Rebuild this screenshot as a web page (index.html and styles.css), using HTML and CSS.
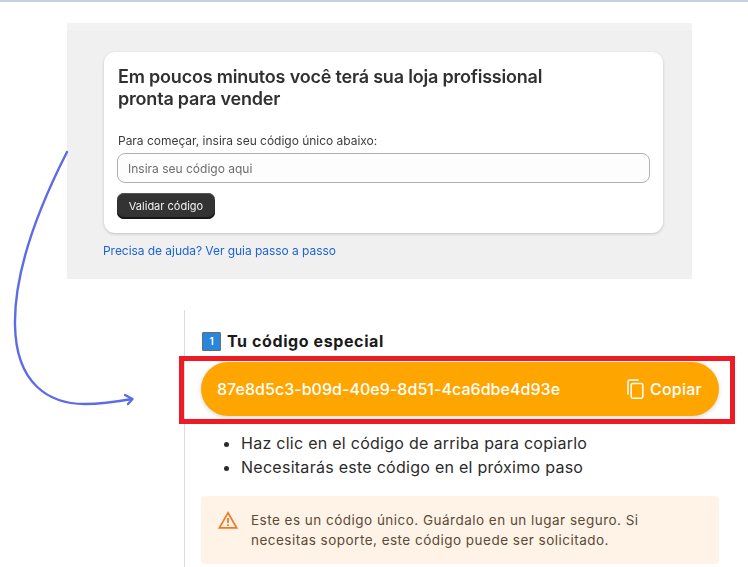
FILE: index.html
```html
<!DOCTYPE html>
<html lang="es">
<head>
<meta charset="utf-8">
<title>Tu código especial</title>
<link rel="stylesheet" href="styles.css">
</head>
<body>
<div class="topbar"></div>
<section class="shot">
  <div class="shot-strip"></div>
  <div class="card">
    <h1 class="card-title">Em poucos minutos você terá sua loja profissional<br>pronta para vender</h1>
    <label class="card-label">Para começar, insira seu código único abaixo:</label>
    <div class="fake-input">Insira seu código aqui</div>
    <div class="fake-button">Validar código</div>
  </div>
  <a class="help-link">Precisa de ajuda? Ver guia passo a passo</a>
</section>
<main class="step">
  <h2 class="step-title"><span class="keycap">1</span>Tu código especial</h2>
  <div class="code-wrap">
    <div class="code-pill">
      <span class="code-value">87e8d5c3-b09d-40e9-8d51-4ca6dbe4d93e</span>
      <span class="copy">
        <svg class="copy-icon" viewBox="0 0 18 20" fill="none" stroke="#fff" stroke-width="1.5" stroke-linejoin="round" stroke-linecap="round">
          <path d="M2 15V3a2 2 0 0 1 2-2h8"/>
          <rect x="5.2" y="4.4" width="11.6" height="14.8" rx="1.6"/>
        </svg>
        Copiar
      </span>
    </div>
    <div class="highlight"></div>
  </div>
  <ul class="tips">
    <li>Haz clic en el código de arriba para copiarlo</li>
    <li>Necesitarás este código en el próximo paso</li>
  </ul>
  <div class="notice">
    <svg class="notice-icon" viewBox="0 0 20 18" fill="none" stroke="#f07a21" stroke-width="1.7" stroke-linejoin="miter">
      <path d="M10 1.8 1.4 16.8h17.2z"/>
      <path d="M10 7v5M10 13.2v1.8" stroke-width="1.8"/>
    </svg>
    <p class="notice-text">Este es un código único. Guárdalo en un lugar seguro. Si necesitas soporte, este código puede ser solicitado.</p>
  </div>
</main>
<svg class="arrow" width="748" height="567" viewBox="0 0 748 567" fill="none" stroke="#5d6be6" stroke-width="2.4" stroke-linecap="round" stroke-linejoin="round">
  <path d="M67 152C40 205 14 270 15 325C16 385 50 404 85 404C100 404 115 402 132 399"/>
  <path d="M125 395 132.500 399 128 404"/>
</svg>
</body>
</html>
```
FILE: styles.css
```css
* { box-sizing: border-box; }
html, body { margin: 0; padding: 0; }
body {
  position: relative;
  width: 748px;
  height: 567px;
  overflow: hidden;
  background: #fff;
  font-family: Inter, "Liberation Sans", sans-serif;
}
.topbar { height: 2px; background: #c6d1e2; }

.shot {
  margin: 21px 56px 0 67px;
  height: 256px;
  background: #f0f0f0;
  display: flex;
  flex-direction: column;
  align-items: flex-start;
  filter: blur(.3px);
}
.shot-strip { height: 9px; width: 100%; background: #f2f2f2; border-bottom: 1px solid #eeeeee; flex: none; }
.card {
  margin: 20px 0 0 37px;
  width: 559px;
  height: 181px;
  background: #fff;
  border-radius: 11px;
  box-shadow: 0 1px 3px rgba(0,0,0,.2);
  padding: 14px 14px 0;
  display: flex;
  flex-direction: column;
  align-items: flex-start;
}
.card-title {
  margin: 0;
  font-size: 18px;
  line-height: 22px;
  font-weight: 600;
  color: #303030;
  letter-spacing: -.2px;
}
.card-label {
  margin-top: 23px;
  font-size: 12px;
  line-height: 15px;
  color: #3c3c3c;
  letter-spacing: -.02px;
}
.fake-input {
  margin: 5px 0 0 -1px;
  width: 533px;
  height: 30px;
  border: 1px solid #b0b0b0;
  border-radius: 8px;
  background: #fdfdfd;
  padding: 0 10px;
  font-size: 12px;
  line-height: 29px;
  color: #6d6d6d;
}
.fake-button {
  margin: 10px 0 0 -1px;
  width: 98px;
  height: 26px;
  border-radius: 7px;
  background: #333;
  box-shadow: inset 0 -2px 1px #161616, inset 0 1px 0 #555;
  color: #f2f2f2;
  font-size: 11px;
  font-weight: 400;
  line-height: 26px;
  text-align: center;
}
.help-link {
  margin: 10px 0 0 36px;
  font-size: 12px;
  line-height: 15px;
  color: #1c63d5;
  letter-spacing: -.05px;
}

.step {
  margin: 31px 0 0 184px;
  width: 535px;
  height: 257px;
  border-left: 1px solid #dcdcdc;
  padding: 21px 0 0 16px;
  font-family: Inter, "Liberation Sans", sans-serif;
}
.step-title {
  margin: 0;
  height: 20px;
  display: flex;
  align-items: center;
  font-size: 16px;
  font-weight: 700;
  line-height: 20px;
  color: #1a1a1a;
  letter-spacing: .6px;
}
.keycap {
  width: 19px;
  height: 19px;
  margin: 0 6px 0 1px;
  background: #2a86d9;
  border: 1px solid #5f6f80;
  border-radius: 1px;
  color: #fff;
  font-size: 10px;
  font-weight: 600;
  line-height: 17px;
  text-align: center;
  letter-spacing: 0;
}
.code-wrap { position: relative; margin-top: 11px; }
.code-pill {
  height: 54px;
  border-radius: 27px;
  background: #ffa500;
  box-shadow: 0 1px 4px rgba(0,0,0,.18);
  padding: 0 17px 0 16px;
  display: flex;
  align-items: center;
  justify-content: space-between;
  color: #fff;
  font-size: 16px;
  font-weight: 500;
}
.code-value { letter-spacing: .04px; }
.copy { display: flex; align-items: center; gap: 6px; letter-spacing: .25px; }
.copy-icon { width: 18px; height: 20px; }
.highlight {
  position: absolute;
  top: -6px;
  left: -22px;
  right: -16px;
  bottom: -8px;
  border: 5px solid #ed1c24;
  pointer-events: none;
}
.tips {
  margin: 15px 0 0;
  padding: 0 0 0 40px;
  font-size: 16px;
  line-height: 24px;
  color: #2b2b2b;
  letter-spacing: .27px;
}
.notice {
  margin-top: 17px;
  height: 68px;
  background: #fef3e6;
  border-radius: 4px;
  padding: 14px 17px 0;
  display: flex;
  align-items: flex-start;
  gap: 13px;
}
.notice-icon { flex: none; width: 20px; height: 18px; margin-top: 1px; }
.notice-text {
  margin: 0;
  width: 400px;
  font-size: 13.500px;
  line-height: 20px;
  color: #5c4a37;
  letter-spacing: .48px;
}
.arrow { position: absolute; top: 0; left: 0; pointer-events: none; }
```
